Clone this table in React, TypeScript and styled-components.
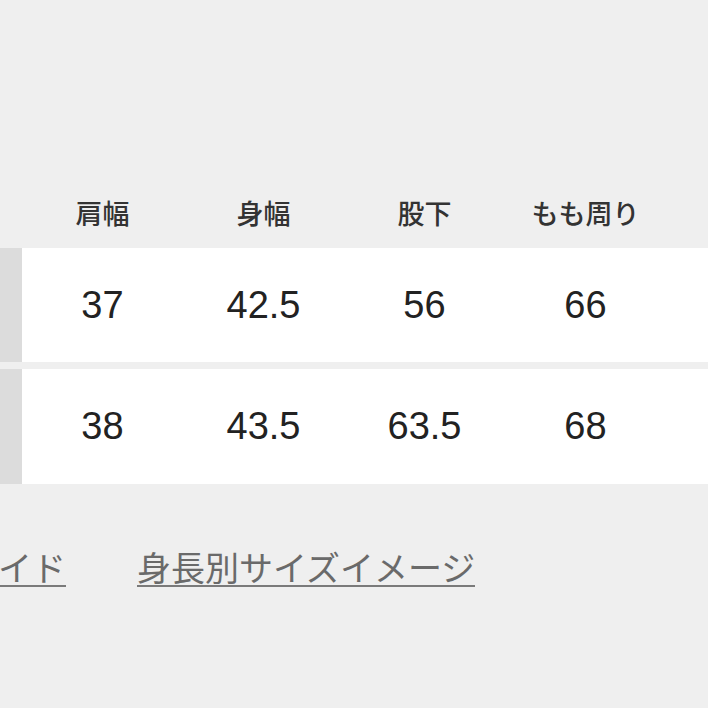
import { Fragment } from 'react';
import styled, { createGlobalStyle } from 'styled-components';

const GlobalStyle = createGlobalStyle`
  html, body {
    margin: 0;
    padding: 0;
    background: #efefef;
    overflow: hidden;
  }
  body {
    font-family: 'Noto Sans CJK JP', 'Liberation Sans', sans-serif;
  }
`;

const Page = styled.div`
  width: 708px;
  height: 708px;
  overflow: hidden;
  padding-top: 190px;
  box-sizing: border-box;
`;

const Table = styled.div`
  display: grid;
  grid-template-columns: 140px repeat(5, 161px);
  row-gap: 7px;
  margin-left: -118px;
  width: max-content;
`;

const HeadCell = styled.div`
  height: 51px;
  padding-bottom: 6px;
  box-sizing: border-box;
  display: flex;
  align-items: center;
  justify-content: center;
  font-family: 'Noto Sans CJK JP', sans-serif;
  font-size: 27px;
  font-weight: 500;
  color: #333333;
  white-space: nowrap;
`;

const LabelCell = styled.div<{ $tall?: boolean }>`
  height: ${p => (p.$tall ? 115 : 114)}px;
  background: #dcdcdc;
`;

const ValueCell = styled.div<{ $tall?: boolean }>`
  height: ${p => (p.$tall ? 115 : 114)}px;
  background: #ffffff;
  display: flex;
  align-items: center;
  justify-content: center;
  font-family: 'Liberation Sans', Arial, sans-serif;
  font-size: 38px;
  color: #222222;
`;

const Links = styled.div`
  display: flex;
  gap: 71px;
  margin-left: -137px;
  padding-top: 65px;
  width: max-content;
`;

const SizeLink = styled.a`
  display: inline-block;
  font-family: 'Noto Sans CJK JP', sans-serif;
  font-size: 34px;
  line-height: 36px;
  color: #6a6a6a;
  text-decoration: none;
  border-bottom: 2px solid #7a7a7a;
  white-space: nowrap;
`;

const headers = ['肩幅', '身幅', '股下', 'もも周り', 'ヒップ'];

const rows = [
  { size: 'S', values: ['37', '42.5', '56', '66', '90'] },
  { size: 'M', values: ['38', '43.5', '63.5', '68', '94'] },
];

export default function App() {
  return (
    <>
      <GlobalStyle />
      <Page>
        <Table>
          <HeadCell />
          {headers.map(h => (
            <HeadCell key={h}>{h}</HeadCell>
          ))}
          {rows.map((row, i) => (
            <Fragment key={row.size}>
              <LabelCell $tall={i === 1} />
              {row.values.map((v, j) => (
                <ValueCell key={j} $tall={i === 1}>
                  {v}
                </ValueCell>
              ))}
            </Fragment>
          ))}
        </Table>
        <Links>
          <SizeLink>サイズガイド</SizeLink>
          <SizeLink>身長別サイズイメージ</SizeLink>
        </Links>
      </Page>
    </>
  );
}
